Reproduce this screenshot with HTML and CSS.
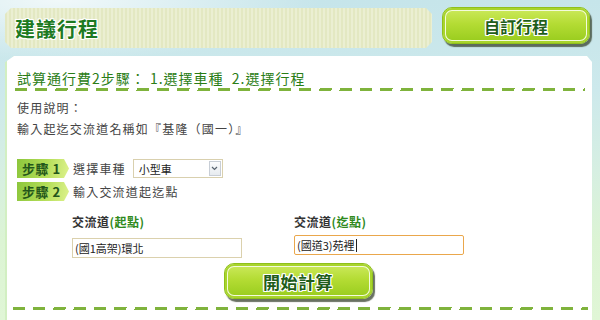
FILE: index.html
```html
<!DOCTYPE html>
<html>
<head>
    <meta charset="utf-8">
    <link rel="stylesheet" href="styles.css">
    <title>建議行程</title>
</head>
<body>
    <div class="top">
        <div class="title-bar"><h1>建議行程</h1></div>
        <a class="btn btn-custom">自訂行程</a>
    </div>
    <div class="panel">
        <h2 class="panel-title">試算通行費2步驟： 1.選擇車種&nbsp; 2.選擇行程</h2>
        <div class="dash"></div>
        <div class="help">
            <p>使用說明：</p>
            <p>輸入起迄交流道名稱如『基隆（國一）』</p>
        </div>
        <div class="steps">
            <div class="step">
                <span class="badge">步驟 1</span>
                <span class="step-text">選擇車種</span>
                <div class="select">
                    <span class="select-value">小型車</span>
                    <span class="select-arrow">
                        <svg width="7" height="5" viewBox="0 0 7 5"><path d="M1 1 L3.5 3.5 L6 1" fill="none" stroke="#5a6470" stroke-width="1.2"/></svg>
                    </span>
                </div>
            </div>
            <div class="step">
                <span class="badge">步驟 2</span>
                <span class="step-text">輸入交流道起迄點</span>
            </div>
        </div>
        <div class="fields">
            <div class="field">
                <label>交流道<em>(起點)</em></label>
                <div class="textbox from">(國1高架)環北</div>
            </div>
            <div class="field">
                <label>交流道<em>(迄點)</em></label>
                <div class="textbox to">(國道3)苑裡<span class="caret"></span></div>
            </div>
        </div>
        <div class="actions">
            <a class="btn btn-go">開始計算</a>
        </div>
        <div class="dash bottom"></div>
    </div>
</body>
</html>
```

FILE: styles.css
```css
body{
    margin: 0;
    font-family: "Noto Sans CJK TC", "Liberation Sans", sans-serif;
    background:
        radial-gradient(ellipse 260px 60px at 60px 0, rgba(255,255,255,.75), rgba(255,255,255,0)),
        linear-gradient(180deg, #c6e5ea 0px, #cde9ec 90px, #d6efe2 170px, #dcf4d4 240px, #e0f6d6 320px);
}
.top{
    display: flex;
    align-items: flex-start;
    padding: 7px 0 0 5px;
}
.title-bar{
    width: 427px;
    height: 40px;
    margin-top: 1px;
    display: flex;
    align-items: center;
    padding-left: 10px;
    box-sizing: border-box;
    background: repeating-linear-gradient(90deg, #e3e8c2 0px, #e3e8c2 2px, #ebefd2 2px, #ebefd2 4px);
    clip-path: polygon(6px 0, calc(100% - 6px) 0, 100% 6px, 100% calc(100% - 6px), calc(100% - 6px) 100%, 6px 100%, 0 calc(100% - 6px), 0 6px);
}
.title-bar h1{
    margin: 0;
    font-size: 20px;
    font-weight: bold;
    color: #1d7a21;
    letter-spacing: 1px;
    text-shadow: 1px 0 0 #fff, -1px 0 0 #fff, 0 1px 0 #fff, 0 -1px 0 #fff, 1px 1px 0 #fff, -1px -1px 0 #fff, 1px -1px 0 #fff, -1px 1px 0 #fff;
}
.btn{
    display: flex;
    align-items: center;
    justify-content: center;
    box-sizing: border-box;
    border-radius: 10px;
    border: 1px solid #8fc01c;
    background: linear-gradient(180deg, #cdea5e 0%, #b4dc34 45%, #97cb1c 100%);
    box-shadow: inset 0 0 0 2px #a8d42c, inset 0 0 0 3px #f3fbdc, 2px 3px 1px rgba(55,65,45,.75);
    color: #1f5e1a;
    font-weight: bold;
    text-shadow: 1px 0 0 #fff, -1px 0 0 #fff, 0 1px 0 #fff, 0 -1px 0 #fff, 1px 1px 0 #fff, -1px -1px 0 #fff, 1px -1px 0 #fff, -1px 1px 0 #fff;
    cursor: pointer;
}
.btn-custom{
    width: 148px;
    height: 37px;
    margin-left: 10px;
    font-size: 16px;
}
.panel{
    width: 585px;
    margin: 8px 0 0 7px;
    height: 264px;
    background: #fff;
    box-shadow: -2px 0 0 #d2efc2;
    clip-path: polygon(7px 0, calc(100% - 5px) 0, 100% 6px, 100% 100%, -3px 100%, -3px 7px);
}
.panel-title{
    margin: 0;
    padding: 12px 0 0 10px;
    font-size: 14px;
    line-height: 20px;
    font-weight: normal;
    color: #2a7d16;
    letter-spacing: 1px;
    white-space: pre;
}
.dash{
    height: 3px;
    margin: 0 7px 0 8px;
    background: repeating-linear-gradient(100deg, #7fb33c 0px, #7fb33c 12px, transparent 12px, transparent 20px);
}
.dash.bottom{
    margin: 8px 4px 0 6px;
}
.help{
    margin-top: 6px;
    padding-left: 10px;
    font-size: 12px;
    line-height: 21px;
    color: #444;
    letter-spacing: 1.2px;
}
.help p{
    margin: 0;
}
.steps{
    margin-top: 20px;
    padding-left: 10px;
    display: flex;
    flex-direction: column;
    gap: 4px;
}
.step{
    display: flex;
    align-items: center;
    height: 19px;
}
.badge{
    width: 52px;
    height: 19px;
    line-height: 19px;
    box-sizing: border-box;
    padding-left: 5px;
    font-size: 13px;
    font-weight: bold;
    color: #23561a;
    letter-spacing: 0.5px;
    background: linear-gradient(100deg, #8cc63c 0%, #b4de58 55%, #def28e 100%);
    clip-path: polygon(0 0, 47px 0, 52px 50%, 47px 100%, 0 100%);
}
.step-text{
    margin-left: 4px;
    font-size: 12px;
    color: #444;
    letter-spacing: 1.2px;
}
.select{
    display: flex;
    align-items: center;
    justify-content: space-between;
    width: 90px;
    height: 19px;
    margin-left: 7px;
    box-sizing: border-box;
    border: 1px solid #d9d0ae;
    padding: 0 1px 0 5px;
    font-size: 11px;
    color: #222;
}
.select-arrow{
    display: flex;
    align-items: center;
    justify-content: center;
    width: 12px;
    height: 15px;
    box-sizing: border-box;
    border: 1px solid #c8ced6;
    background: linear-gradient(180deg, #fbfcfd, #e7ebef);
}
.fields{
    display: flex;
    margin-top: 12px;
    padding-left: 65px;
}
.field{
    width: 222px;
    display: flex;
    flex-direction: column;
}
.field label{
    font-size: 12px;
    line-height: 18px;
    font-weight: bold;
    color: #333;
    letter-spacing: 0.5px;
}
.field label em{
    font-style: normal;
    color: #2f8a1c;
}
.textbox{
    width: 170px;
    height: 20px;
    box-sizing: border-box;
    border: 1px solid #dbd1ad;
    padding-left: 2px;
    font-size: 11px;
    line-height: 18px;
    color: #222;
    display: flex;
    align-items: center;
}
.textbox.from{
    margin-top: 7px;
}
.textbox.to{
    margin-top: 4px;
    border-color: #eaa74c;
    border-radius: 2px;
}
.caret{
    width: 1px;
    height: 13px;
    background: #222;
    margin-left: 1px;
}
.actions{
    display: flex;
    justify-content: center;
    margin-top: 5px;
    padding-right: 3px;
}
.btn-go{
    width: 149px;
    height: 36px;
    font-size: 17px;
    letter-spacing: 0.5px;
}
```
